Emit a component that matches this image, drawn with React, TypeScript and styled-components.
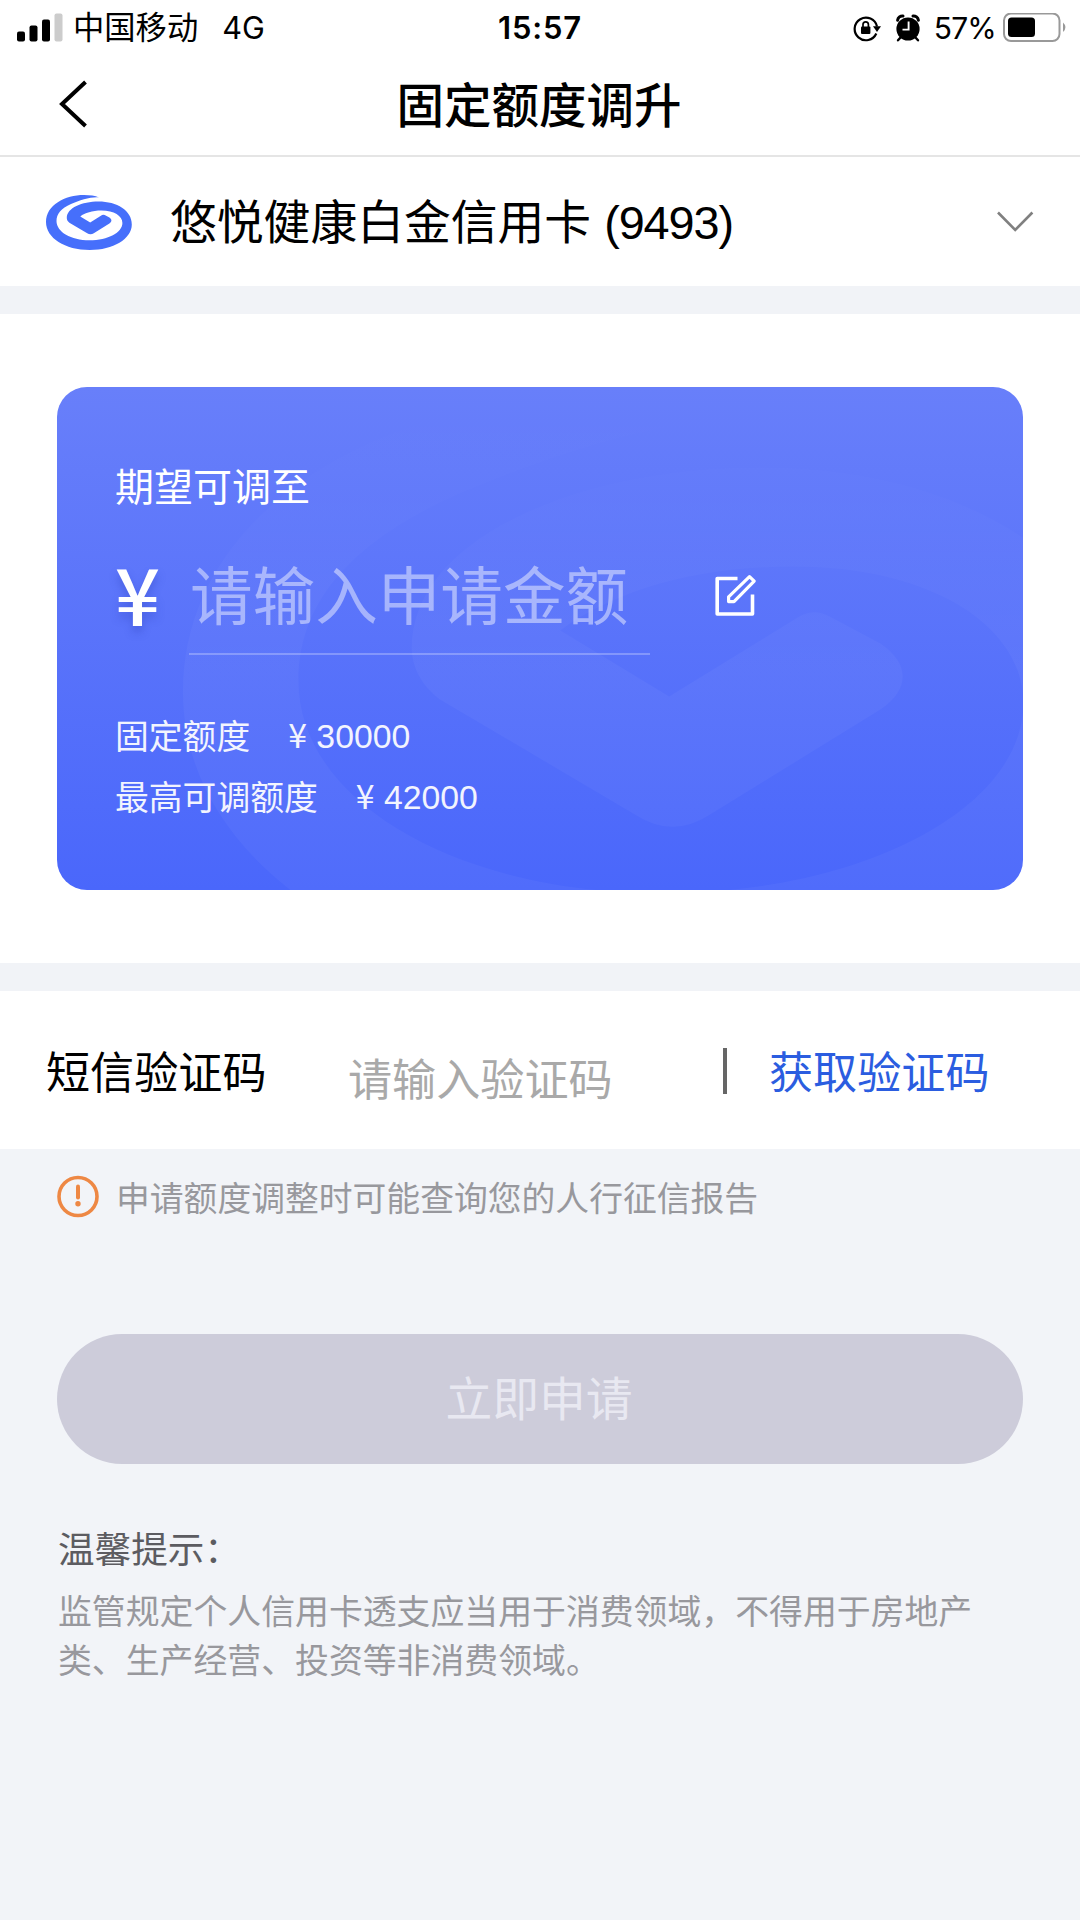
import React from "react";
import styled, { createGlobalStyle } from "styled-components";

const GlobalStyle = createGlobalStyle`
  * { box-sizing: border-box; }
  body {
    margin: 0;
    background: #f2f4f8;
    font-family: "Liberation Sans", "Noto Sans CJK SC", sans-serif;
    color: #000;
  }
  svg { display: block; flex: none; }
`;

const Page = styled.main`
  width: 1080px;
  height: 1920px;
  display: flex;
  flex-direction: column;
  background: #f2f4f8;
  overflow: hidden;
  white-space: nowrap;
`;

const StatusBar = styled.div`
  height: 54px;
  display: grid;
  grid-template-columns: 1fr auto 1fr;
  align-items: center;
  padding: 0 12px 0 17px;
  background: #fff;
  font-family: Inter, "Noto Sans CJK SC", sans-serif;
  font-size: 30px;
  line-height: 54px;
`;

const StatusLeft = styled.div`
  display: flex;
  align-items: center;
`;

const Carrier = styled.span`
  margin-left: 10px;
  padding-top: 1px;
  font-size: 31.3px;
`;

const Network = styled.span`
  margin-left: 24px;
  font-size: 30.6px;
`;

const Clock = styled.time`
  font-size: 31px;
  font-weight: 600;
  letter-spacing: 0.8px;
  padding-right: 5px;
`;

const StatusRight = styled.div`
  display: flex;
  align-items: center;
  justify-content: flex-end;
`;

const AlarmIcon = styled.svg`
  margin-left: 15px;
`;

const BatteryText = styled.span`
  margin: 0 7px 0 14px;
  letter-spacing: -0.8px;
`;

const NavBar = styled.header`
  height: 103px;
  display: grid;
  grid-template-columns: 1fr auto 1fr;
  align-items: center;
  padding: 0 60px 0 58px;
  background: #fff;
  border-bottom: 2px solid #e5e5e5;
`;

const BackIcon = styled.svg`
  margin: 0 0 2px 0;
`;

const Title = styled.h1`
  margin: 0;
  padding-top: 4px;
  font-size: 47.5px;
  line-height: 70px;
  font-weight: 500;
`;

const CardSelect = styled.section`
  height: 129px;
  display: flex;
  align-items: center;
  padding: 2px 46px 0;
  background: #fff;
`;

const CardName = styled.span`
  flex: 1;
  margin-left: 37px;
  font-size: 46.8px;
  line-height: 60px;
`;

const CardTail = styled.span`
  letter-spacing: -1.1px;
`;

const Gap = styled.div`
  height: 28px;
  flex: none;
  background: #f1f3f7;
`;

const QuotaSection = styled.section`
  height: 649px;
  padding: 73px 57px 0;
  background: #fff;
`;

const QuotaCard = styled.div`
  position: relative;
  height: 503px;
  padding: 71px 58px 0;
  border-radius: 30px;
  overflow: hidden;
  background: linear-gradient(180deg, #687ffa 0%, #4a67fb 100%);
  color: #fff;
`;

const Watermark = styled.svg`
  position: absolute;
  left: 0;
  top: 0;
`;

const CardBody = styled.div`
  position: relative;
  display: flex;
  flex-direction: column;
`;

const Expect = styled.div`
  font-size: 39px;
  line-height: 60px;
`;

const AmountRow = styled.div`
  display: flex;
  align-items: center;
  height: 108px;
  margin-top: 29px;
`;

const BigYen = styled.span`
  width: 74px;
  margin-bottom: 19px;
  font-family: "Noto Sans CJK SC", sans-serif;
  font-size: 79px;
  line-height: 90px;
  font-weight: 500;
  text-shadow: 0 6px 8px rgba(40, 60, 180, 0.35);
`;

const AmountInput = styled.div`
  width: 461px;
  height: 108px;
  font-size: 62.6px;
  line-height: 82px;
  padding: 9px 0 0 1px;
  color: rgba(255, 255, 255, 0.46);
  border-bottom: 2px solid rgba(255, 255, 255, 0.26);
`;

const EditIcon = styled.svg`
  margin: 0 0 13px 65px;
`;

const QuotaList = styled.dl`
  margin: 52px 0 0;
`;

const QuotaRow = styled.div`
  display: flex;
  gap: 38px;
  height: 61px;
  font-size: 33.8px;
  line-height: 61px;
  opacity: 0.93;
`;

const QuotaLabel = styled.dt``;

const QuotaValue = styled.dd`
  margin: 0;
  line-height: 54px;
`;

const Yen = styled.span`
  font-family: "Noto Sans CJK SC", sans-serif;
`;

const SmsRow = styled.section`
  height: 158px;
  display: flex;
  align-items: flex-start;
  padding: 53px 46px 0;
  background: #fff;
  font-size: 44.1px;
  line-height: 60px;
`;

const SmsLabel = styled.label`
  width: 302px;
`;

const SmsInput = styled.div`
  width: 375px;
  padding-top: 7px;
  color: #a9a9a9;
`;

const Bar = styled.i`
  width: 4px;
  height: 46px;
  margin-top: 4px;
  background: #666;
`;

const GetCode = styled.a`
  margin-left: 42px;
  color: #2b5de0;
`;

const Notice = styled.div`
  height: 94px;
  display: flex;
  align-items: center;
  padding: 0 57px;
  gap: 16px;
  font-size: 33.8px;
  line-height: 60px;
  color: #98989d;
`;

const NoticeText = styled.span`
  padding-top: 5px;
`;

const Submit = styled.button`
  height: 130px;
  flex: none;
  margin: 91px 57px 0;
  padding: 2px 2px 0 0;
  border: 0;
  border-radius: 65px;
  background: #cdccda;
  color: #e8e8f1;
  font: 46.8px/60px "Liberation Sans", "Noto Sans CJK SC", sans-serif;
`;

const Tips = styled.section`
  padding: 57px 57px 0 58px;
`;

const TipsTitle = styled.h2`
  margin: 0;
  font-size: 36.6px;
  line-height: 60px;
  font-weight: 400;
  color: #5c5c61;
`;

const TipsText = styled.p`
  margin: 7px 0 0;
  font-size: 33.87px;
  line-height: 49px;
  color: #98989d;
`;

const LOGO_PATH =
  "M53 2.4C45 1.6 34 5.2 25 9C15 13.5 10.5 19 10.5 26C10.5 37 25 45.3 43.5 45.3C62 45.3 76.4 37.5 76.4 28C76.4 21 68 15.6 55.5 15.6C46 15.6 39 18 34.3 21.4L44.2 27.4L56.1 20.1Q57.4 19.4 58.7 20.1L63.4 22.6C66.1 24.4 66.1 26.8 63.4 28.6L47.8 38.2Q44.5 40.3 41.2 38.2L23.4 27.7C21.5 26.3 20.8 24.5 20.8 23C20.8 13 36 6.6 52.5 6.6C71 6.6 85.8 15.5 85.8 29.5C85.8 44 67 55 43.8 55C19 55 0 43 0 27C0 10 19 0 38 0C44 0 49 .8 53 2.4Z";

const quotas = [
  { label: "固定额度", value: "30000" },
  { label: "最高可调额度", value: "42000" },
];

export default function App() {
  return (
    <Page>
      <GlobalStyle />
      <StatusBar>
        <StatusLeft>
          <svg width="46" height="30" viewBox="0 0 46 30">
            <rect x="0" y="18.5" width="8" height="10" rx="2" />
            <rect x="12.5" y="12.5" width="8" height="16" rx="2" />
            <rect x="25" y="6.5" width="8" height="22" rx="2" />
            <rect x="37.5" y="0.5" width="8" height="28" rx="2" fill="#ccc" />
          </svg>
          <Carrier>中国移动</Carrier>
          <Network>4G</Network>
        </StatusLeft>
        <Clock>15:57</Clock>
        <StatusRight>
          <svg width="28" height="28" viewBox="0 0 28 28">
            <path d="M23.3 19.5A11.3 11.3 0 1 1 24 12.5" fill="none" stroke="#000" strokeWidth="2.2" />
            <path d="M20 12.2H28L24 18Z" />
            <rect x="8" y="12.6" width="9.4" height="7.4" rx="1" />
            <path d="M10 13V10.6a2.7 2.7 0 0 1 5.4 0V13" fill="none" stroke="#000" strokeWidth="1.7" />
          </svg>
          <AlarmIcon width="24" height="28" viewBox="0 0 24 28">
            <circle cx="12" cy="15" r="11.6" />
            <path d="M1.6 6.2A5 5 0 0 1 7 2M22.4 6.2A5 5 0 0 0 17 2" fill="none" stroke="#000" strokeWidth="3" strokeLinecap="round" />
            <path d="M4.5 23.5L2 26.3M19.5 23.5L22 26.3" stroke="#000" strokeWidth="2.4" strokeLinecap="round" />
            <path d="M12.6 7.5V15.6H6.5" fill="none" stroke="#fff" strokeWidth="1.9" />
          </AlarmIcon>
          <BatteryText>57%</BatteryText>
          <svg width="65" height="30" viewBox="0 0 65 30">
            <rect x="1" y="0.5" width="55.5" height="27.5" rx="7" fill="none" stroke="#999" strokeWidth="2" />
            <rect x="5" y="4.5" width="27" height="19.5" rx="3.5" />
            <path d="M60 9.5Q65 14.2 60 19Z" fill="#999" />
          </svg>
        </StatusRight>
      </StatusBar>

      <NavBar>
        <BackIcon width="32" height="52" viewBox="0 0 32 52">
          <path d="M27.5 4L4 26L27.5 48" fill="none" stroke="#000" strokeWidth="4" />
        </BackIcon>
        <Title>固定额度调升</Title>
      </NavBar>

      <CardSelect>
        <svg width="87" height="55" viewBox="0 0 87 55">
          <path d={LOGO_PATH} fill="#466ffb" />
        </svg>
        <CardName>
          悠悦健康白金信用卡 <CardTail>(9493)</CardTail>
        </CardName>
        <svg width="38" height="24" viewBox="0 0 38 24">
          <path d="M2 1.5L19.2 19L36.4 1.5" fill="none" stroke="#808080" strokeWidth="2.6" />
        </svg>
      </CardSelect>

      <Gap />

      <QuotaSection>
        <QuotaCard>
          <Watermark width="966" height="503" viewBox="0 0 966 503">
            <defs>
              <linearGradient id="watermarkFade" gradientUnits="userSpaceOnUse" x1="0" y1="0" x2="0" y2="45">
                <stop offset="0" stopColor="#fff" stopOpacity="0" />
                <stop offset="0.2" stopColor="#fff" stopOpacity="0.01" />
                <stop offset="0.55" stopColor="#fff" stopOpacity="0.035" />
                <stop offset="1" stopColor="#fff" stopOpacity="0.035" />
              </linearGradient>
            </defs>
            <path d={LOGO_PATH} transform="translate(126 8) scale(11)" fill="url(#watermarkFade)" />
          </Watermark>
          <CardBody>
            <Expect>期望可调至</Expect>
            <AmountRow>
              <BigYen>¥</BigYen>
              <AmountInput>请输入申请金额</AmountInput>
              <EditIcon width="42" height="42" viewBox="0 0 42 42">
                <path d="M22.5 4.5H2.2V40H37.5V20.5" fill="none" stroke="#fff" strokeWidth="3.6" strokeLinejoin="round" />
                <path d="M34.5 2.6L39.2 7.2L19 27.6H13.6V22.8Z" fill="none" stroke="#fff" strokeWidth="3.2" strokeLinejoin="round" />
              </EditIcon>
            </AmountRow>
            <QuotaList>
              {quotas.map((q) => (
                <QuotaRow key={q.label}>
                  <QuotaLabel>{q.label}</QuotaLabel>
                  <QuotaValue>
                    <Yen>¥</Yen> {q.value}
                  </QuotaValue>
                </QuotaRow>
              ))}
            </QuotaList>
          </CardBody>
        </QuotaCard>
      </QuotaSection>

      <Gap />

      <SmsRow>
        <SmsLabel>短信验证码</SmsLabel>
        <SmsInput>请输入验证码</SmsInput>
        <Bar />
        <GetCode>获取验证码</GetCode>
      </SmsRow>

      <Notice>
        <svg width="43" height="43" viewBox="0 0 43 43">
          <circle cx="21" cy="21.5" r="19" fill="none" stroke="#ee8844" strokeWidth="3.6" />
          <path d="M21 11.5V22.5" stroke="#ee8844" strokeWidth="4" strokeLinecap="round" />
          <circle cx="21" cy="28.8" r="2.7" fill="#ee8844" />
        </svg>
        <NoticeText>申请额度调整时可能查询您的人行征信报告</NoticeText>
      </Notice>

      <Submit>立即申请</Submit>

      <Tips>
        <TipsTitle>温馨提示：</TipsTitle>
        <TipsText>
          监管规定个人信用卡透支应当用于消费领域，不得用于房地产
          <br />
          类、生产经营、投资等非消费领域。
        </TipsText>
      </Tips>
    </Page>
  );
}
